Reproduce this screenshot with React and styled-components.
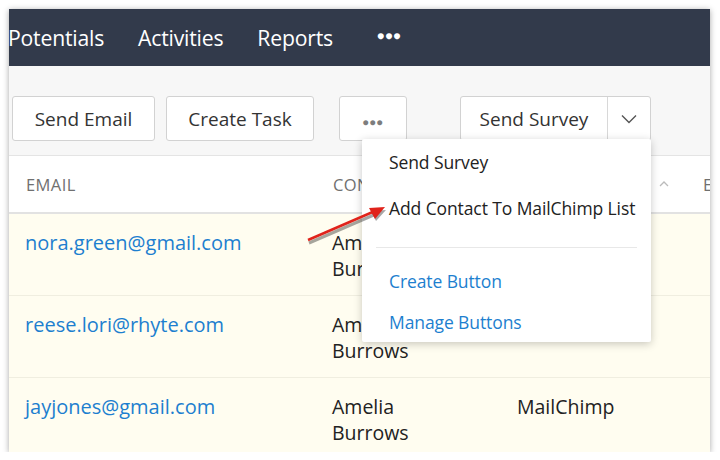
import React from "react";
import styled, { createGlobalStyle } from "styled-components";

const Global = createGlobalStyle`
  body {
    margin: 0;
    background: #ffffff;
    font-family: "Open Sans", Lato, Arial, sans-serif;
  }
`;

const Frame = styled.div`
  position: relative;
  margin: 9px 0 0 9px;
  width: 701px;
  height: 443px;
  overflow: hidden;
  background: #f7f7f7;
  box-shadow: 0 1px 6px rgba(0, 0, 0, 0.35);
`;

const Nav = styled.div`
  display: flex;
  align-items: center;
  gap: 34px;
  height: 57px;
  background: #323a4b;
  color: #ffffff;
`;

const NavItem = styled.span`
  margin-left: ${(p) => (p.first ? "-1px" : p.dots ? "10px" : "0")};
  font-size: ${(p) => (p.dots ? "12px" : "21.2px")};
  letter-spacing: ${(p) => (p.dots ? "1px" : "-0.2px")};
  font-weight: ${(p) => (p.dots ? 700 : 500)};
  margin-bottom: ${(p) => (p.dots ? "4px" : "0")};
`;

const Toolbar = styled.div`
  display: flex;
  align-items: flex-start;
  height: 90px;
  padding: 30px 0 0 3px;
  box-sizing: border-box;
  border-bottom: 1px solid #e4e4e4;
`;

const Button = styled.button`
  height: 45px;
  padding: 0;
  width: ${(p) => p.w}px;
  margin-left: ${(p) => p.ml || 0}px;
  background: #ffffff;
  border: 1px solid #d2d2d2;
  border-radius: 3px;
  font-family: inherit;
  font-size: 19px;
  color: #333;
`;

const Dots = styled.span`
  color: #7d7d7d;
  font-size: 10px;
  font-weight: 700;
  letter-spacing: 1px;
`;

const SplitWrap = styled.div`
  position: relative;
  margin-left: 53px;
`;

const Split = styled.div`
  display: flex;
  height: 45px;
  width: 191px;
  box-sizing: border-box;
  background: #ffffff;
  border: 1px solid #d2d2d2;
  border-radius: 3px;
`;

const SplitMain = styled.div`
  flex: 1;
  display: flex;
  align-items: center;
  justify-content: center;
  font-size: 19px;
  color: #333;
  border-right: 1px solid #d8d8d8;
`;

const SplitCaret = styled.div`
  width: 42px;
  display: flex;
  align-items: center;
  justify-content: center;
`;

const Menu = styled.div`
  position: absolute;
  right: 0;
  top: 43px;
  width: 289px;
  height: 203px;
  box-sizing: border-box;
  background: #ffffff;
  box-shadow: 0 2px 8px rgba(0, 0, 0, 0.22);
  border-radius: 2px;
  padding: 2px 8px 0 27px;
  z-index: 5;
`;

const MenuItem = styled.div`
  height: ${(p) => p.h || 46}px;
  display: flex;
  align-items: center;
  font-size: 17.5px;
  letter-spacing: -0.1px;
  color: ${(p) => (p.link ? "#1d7fcf" : "#222")};
  white-space: nowrap;
`;

const MenuDivider = styled.div`
  height: 1px;
  background: #e8e8e8;
  margin: 14px 6px 16px -13px;
`;

const Header = styled.div`
  display: grid;
  grid-template-columns: 307px 185px 140px 45px 1fr;
  align-items: center;
  height: 56px;
  padding-left: 17px;
  background: #ffffff;
  border-bottom: 2px solid #e2e2e2;
  font-size: 16.5px;
  letter-spacing: 0.4px;
  color: #707070;
  white-space: nowrap;
`;

const Row = styled.div`
  display: grid;
  grid-template-columns: 307px 185px 1fr;
  height: 82px;
  box-sizing: border-box;
  padding: 16px 0 0 16px;
  background: #fffdf0;
  border-bottom: 1px solid #f0eee0;
  font-size: 19.5px;
  line-height: 26px;
  color: #222;
`;

const Email = styled.div`
  color: #1d7fcf;
  font-size: 20px;
`;

const Arrow = styled.svg`
  position: absolute;
  left: 0;
  top: 0;
  pointer-events: none;
  z-index: 6;
`;

const rows = [
  { email: "nora.green@gmail.com", extra: "" },
  { email: "reese.lori@rhyte.com", extra: "" },
  { email: "jayjones@gmail.com", extra: "MailChimp" },
];

export default function App() {
  return (
    <>
      <Global />
      <Frame>
        <Nav>
          <NavItem first>Potentials</NavItem>
          <NavItem>Activities</NavItem>
          <NavItem>Reports</NavItem>
          <NavItem dots>●●●</NavItem>
        </Nav>
        <Toolbar>
          <Button w={143}>Send Email</Button>
          <Button w={148} ml={11}>Create Task</Button>
          <Button w={68} ml={25}><Dots>●●●</Dots></Button>
          <SplitWrap>
            <Split>
              <SplitMain>Send Survey</SplitMain>
              <SplitCaret>
                <svg width="16" height="10" viewBox="0 0 16 10">
                  <path d="M1 1.5l7 7 7-7" fill="none" stroke="#555" strokeWidth="1.4" />
                </svg>
              </SplitCaret>
            </Split>
            <Menu>
              <MenuItem h={42}>Send Survey</MenuItem>
              <MenuItem h={50}>Add Contact To MailChimp List</MenuItem>
              <MenuDivider />
              <MenuItem h={34} link>Create Button</MenuItem>
              <MenuItem h={48} link>Manage Buttons</MenuItem>
            </Menu>
          </SplitWrap>
        </Toolbar>
        <Header>
          <span>EMAIL</span>
          <span>CONTACT</span>
          <span></span>
          <svg width="12" height="8" viewBox="0 0 12 8">
            <path d="M2 6l4-4 4 4" fill="none" stroke="#bbb" strokeWidth="1.3" />
          </svg>
          <span>E</span>
        </Header>
        {rows.map((r) => (
          <Row key={r.email}>
            <Email>{r.email}</Email>
            <div>Amelia<br />Burrows</div>
            <div>{r.extra}</div>
          </Row>
        ))}
        <Arrow width="701" height="443" viewBox="0 0 701 443">
          <line x1="299" y1="232" x2="366" y2="203" stroke="rgba(0,0,0,0.35)" strokeWidth="3" transform="translate(1,2)" />
          <polygon points="376,199 361,200 366,210" fill="rgba(0,0,0,0.35)" transform="translate(1,2)" />
          <line x1="299" y1="231" x2="366" y2="202" stroke="#e0231b" strokeWidth="2.5" />
          <polygon points="376,198 360,199 366,210" fill="#e0231b" />
        </Arrow>
      </Frame>
    </>
  );
}
